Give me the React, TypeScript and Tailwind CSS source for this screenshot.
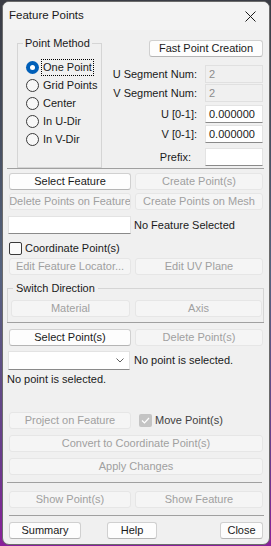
import React from "react";

const font = { fontFamily: '"Liberation Sans", Arial, sans-serif' };

function Btn({ label, disabled, className = "" }: { label: string; disabled?: boolean; className?: string }) {
  return (
    <div
      className={
        "flex h-[17px] items-center justify-center rounded-[3px] border text-[11px] leading-none whitespace-nowrap overflow-hidden " +
        (disabled
          ? "border-[#e6e6e6] bg-[#f5f5f5] text-[#a0a0a0]"
          : "border-[#d0d0d0] border-b-[#b5b5b5] bg-[#fdfdfd] text-[#1a1a1a]") +
        " " +
        className
      }
    >
      {label}
    </div>
  );
}

function Field({ value, disabled, className = "" }: { value?: string; disabled?: boolean; className?: string }) {
  return (
    <div
      className={
        "flex h-[18px] shrink-0 items-center px-[3px] text-[11px] leading-none " +
        (disabled
          ? "border border-[#e0e0e0] bg-[#f0f0f0] text-[#8c8c8c]"
          : "border border-[#e3e3e3] border-b-[#8a8a8a] bg-white text-[#1a1a1a]") +
        " " +
        className
      }
    >
      {value}
    </div>
  );
}

function Radio({ label, checked, focus }: { label: string; checked?: boolean; focus?: boolean }) {
  return (
    <div className="flex h-[18px] items-center">
      {checked ? (
        <span className="flex h-[13px] w-[13px] items-center justify-center rounded-full bg-[#005fb8]">
          <span className="h-[5px] w-[5px] rounded-full bg-white" />
        </span>
      ) : (
        <span className="h-[13px] w-[13px] rounded-full border border-[#3a3a3a] bg-[#f7f7f7]" />
      )}
      <span
        className={
          "ml-[2px] flex h-[17px] items-center px-[1px] text-[11px] text-[#1a1a1a] " +
          (focus ? "border border-dotted border-black" : "border border-transparent")
        }
      >
        {label}
      </span>
    </div>
  );
}

function Row({ children, className = "" }: { children: React.ReactNode; className?: string }) {
  return <div className={"grid grid-cols-[122px_128px] gap-x-[4px] pl-[2px] " + className}>{children}</div>;
}

function LabeledField({ label, value, disabled, mt, pr = "pr-[8px]" }: { label: string; value?: string; disabled?: boolean; mt: string; pr?: string }) {
  return (
    <div className={"flex items-center justify-end " + mt}>
      <span className={"text-[11px] text-[#1a1a1a] " + pr}>{label}</span>
      <Field value={value} disabled={disabled} className="w-[58px]" />
    </div>
  );
}

export default function App() {
  return (
    <div
      className="h-[546px] w-[271px] whitespace-nowrap bg-[linear-gradient(180deg,#3a3c44_0%,#55637f_50%,#6a3a8c_85%,#8a1f9a_100%)] pl-[2px] pt-[1px]"
      style={font}
    >
      <div className="flex h-[544px] w-[268px] flex-col overflow-hidden rounded-[7px] border border-[#6b6b6b] bg-[#f0f0f0]">
        {/* title bar */}
        <div className="flex h-[28px] shrink-0 items-center justify-between bg-[#f3f3f3] pl-[6px] pr-[13px]">
          <span className="text-[11.5px] text-[#1a1a1a]">Feature Points</span>
          <svg width="11" height="11" viewBox="0 0 11 11">
            <path d="M0.5 0.5 L10.5 10.5 M10.5 0.5 L0.5 10.5" stroke="#1a1a1a" strokeWidth="1" />
          </svg>
        </div>

        <div className="flex flex-col pl-[4px] pr-[5px]">
          {/* top section */}
          <div className="flex h-[138px] items-start">
            <fieldset className="ml-[10px] mt-[5px] h-[133px] w-[85px] shrink-0 border border-[#d5d5d5] pl-[8px] pt-[7px]">
              <legend className="ml-[-3px] px-[2px] text-[11px] leading-[16px] text-[#1a1a1a]">Point Method</legend>
              <Radio label="One Point" checked focus />
              <Radio label="Grid Points" />
              <Radio label="Center" />
              <Radio label="In U-Dir" />
              <Radio label="In V-Dir" />
            </fieldset>
            <div className="mr-[1px] flex flex-1 flex-col items-stretch">
              <Btn label="Fast Point Creation" className="mt-[10px] w-[114px] self-end" />
              <LabeledField label="U Segment Num:" value="2" disabled mt="mt-[8px]" />
              <LabeledField label="V Segment Num:" value="2" disabled mt="mt-[1px]" />
              <LabeledField label="U [0-1]:" value="0.000000" mt="mt-[3px]" />
              <LabeledField label="V [0-1]:" value="0.000000" mt="mt-[2px]" />
              <LabeledField label="Prefix:" mt="mt-[5px]" pr="pr-[14px]" />
            </div>
          </div>
          <div className="h-[1px] bg-[#a0a0a0]" />

          <Row className="mt-[4px]">
            <Btn label="Select Feature" />
            <Btn label="Create Point(s)" disabled />
          </Row>
          <Row className="mt-[3px]">
            <Btn label="Delete Points on Feature" disabled />
            <Btn label="Create Points on Mesh" disabled />
          </Row>
          <div className="mt-[6px] flex items-center pl-[1px]">
            <Field className="w-[123px]" />
            <span className="ml-[3px] text-[11px] text-[#1a1a1a]">No Feature Selected</span>
          </div>
          <div className="mt-[7px] flex h-[14px] items-center pl-[2px]">
            <span className="h-[13px] w-[13px] rounded-[2px] border border-[#3a3a3a] bg-[#fbfbfb]" />
            <span className="ml-[3px] text-[11px] text-[#1a1a1a]">Coordinate Point(s)</span>
          </div>
          <Row className="mt-[3px]">
            <Btn label="Edit Feature Locator..." disabled />
            <Btn label="Edit UV Plane" disabled />
          </Row>

          <fieldset className="mt-[5px] h-[42px] border border-b-0 border-[#d5d5d5] pl-[3px] pr-[1px] pt-[4px]">
            <legend className="ml-[2px] px-[3px] text-[11px] leading-[16px] text-[#1a1a1a]">Switch Direction</legend>
            <div className="grid grid-cols-[119px_127px] gap-x-[5px]">
              <Btn label="Material" disabled />
              <Btn label="Axis" disabled />
            </div>
          </fieldset>
          <div className="h-[1px] bg-[#a0a0a0]" />

          <Row className="mt-[6px]">
            <Btn label="Select Point(s)" />
            <Btn label="Delete Point(s)" disabled />
          </Row>
          <div className="mt-[5px] flex items-center pl-[1px]">
            <div className="flex h-[19px] w-[122px] items-center justify-end border border-[#e3e3e3] border-b-[#8a8a8a] bg-white pr-[5px]">
              <svg width="8" height="5" viewBox="0 0 8 5">
                <path d="M0.5 0.5 L4 4 L7.5 0.5" stroke="#606060" strokeWidth="1" fill="none" />
              </svg>
            </div>
            <span className="ml-[4px] text-[11px] text-[#1a1a1a]">No point is selected.</span>
          </div>
          <div className="mt-[1px] h-[16px] text-[11px] leading-[16px] text-[#1a1a1a]">No point is selected.</div>

          <div className="mt-[25px] flex items-center pl-[2px]">
            <Btn label="Project on Feature" disabled className="w-[122px]" />
            <span className="ml-[8px] flex h-[13px] w-[13px] items-center justify-center rounded-[2px] bg-[#c4c4c4]">
              <svg width="9" height="7" viewBox="0 0 9 7">
                <path d="M1 3.5 L3.5 6 L8 1" stroke="white" strokeWidth="1.2" fill="none" />
              </svg>
            </span>
            <span className="ml-[3px] text-[11px] text-[#404040]">Move Point(s)</span>
          </div>
          <div className="pl-[2px] pr-[1px]">
            <Btn label="Convert to Coordinate Point(s)" disabled className="mt-[6px]" />
            <Btn label="Apply Changes" disabled className="mt-[6px]" />
          </div>
          <div className="mt-[7px] mr-[2px] h-[1px] bg-[#a0a0a0]" />
          <Row className="mt-[8px]">
            <Btn label="Show Point(s)" disabled />
            <Btn label="Show Feature" disabled />
          </Row>
          <div className="ml-[2px] mt-[7px] h-[1px] bg-[#a0a0a0]" />
          <div className="mt-[6px] flex items-center pl-[2px] pr-[1px]">
            <Btn label="Summary" className="w-[72px]" />
            <Btn label="Help" className="ml-[26px] w-[50px]" />
            <Btn label="Close" className="ml-auto w-[43px]" />
          </div>
        </div>
      </div>
    </div>
  );
}
